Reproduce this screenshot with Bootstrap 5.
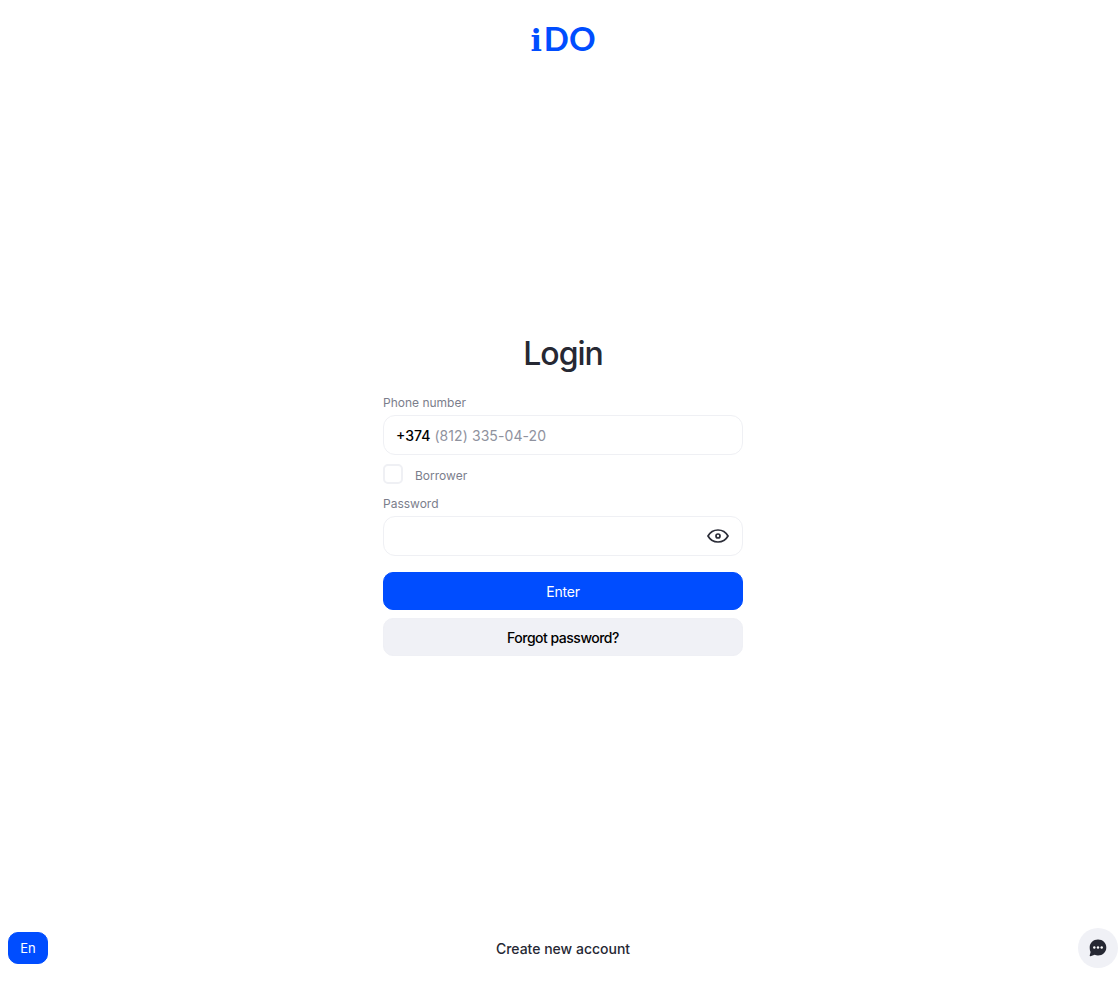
<!DOCTYPE html>
<html lang="en">
<head>
  <meta charset="UTF-8" />
  <title>Login</title>
  <link href="https://cdn.jsdelivr.net/npm/bootstrap@5.3.3/dist/css/bootstrap.min.css" rel="stylesheet" />
  <style>
    body { font-family: Inter, "Liberation Sans", sans-serif; color: #262833; background: #fff; }
    .page-wrap { height: 100vh; padding: 0 2px 22px 8px; }
    .brand-logo { font-family: Lato, sans-serif; font-weight: 700; font-size: 33px; line-height: 36px; height: 36px; color: #004dff; margin-top: 20px; }
    .brand-i { font-family: "DejaVu Serif", serif; font-weight: 700; font-size: 30px; margin-right: 2px; }
    .login-box { width: 360px; margin-top: 278px; }
    .login-title { font-size: 32px; line-height: 40px; font-weight: 500; letter-spacing: -1px; color: #262833; margin-bottom: 20px; }
    .field-label { font-size: 12px; line-height: 16px; color: #7b7e8c; padding-top: 1px; margin-bottom: 4px; display: block; }
    .field-box { height: 40px; border: 1px solid #eff0f4; border-radius: 12px; padding: 0 13px 0 12px; }
    .field-box input { border: 0; outline: 0; padding: 0; font-size: 14px; background: transparent; letter-spacing: 0.08px; }
    .field-box input::placeholder { color: #8f929e; opacity: 1; }
    .phone-prefix { font-size: 14px; font-weight: 500; color: #000; margin-right: 4px; }
    .eye-btn { border: 0; background: none; padding: 0; line-height: 0; }
    .borrower-row { margin: 9px 0 11px; height: 20px; }
    .borrower-row .form-check-input { width: 20px; height: 20px; margin: 0; border: 2px solid #eff0f4; border-radius: 5px; }
    .borrower-row label { font-size: 12px; color: #7b7e8c; margin-left: 12px; position: relative; top: 2px; }
    .btn-enter, .btn-forgot { height: 38px; border-radius: 10px; font-size: 14px; padding: 0; }
    .btn-enter { background: #004dff; border-color: #004dff; color: #fff; margin-top: 16px; font-weight: 400; letter-spacing: -0.2px; }
    .btn-forgot { background: #f0f1f6; border-color: #eff0f5; color: #000; margin-top: 8px; font-weight: 500; letter-spacing: -0.5px; }
    .bottom-bar { height: 40px; }
    .lang-btn { width: 40px; height: 32px; border-radius: 10px; background: #004dff; border-color: #004dff; color: #fff; font-size: 13px; padding: 1px 0 0; }
    .create-link { font-size: 14px; font-weight: 500; color: #262833; text-decoration: none; }
    .chat-btn { width: 40px; height: 40px; background: #f0f1f6; border: 0; padding: 0; }
  </style>
</head>
<body>

  <div class="page-wrap d-flex flex-column align-items-center">
    <!-- Logo -->
    <div class="brand-logo"><span class="brand-i">i</span>DO</div>

    <!-- Login form -->
    <main class="login-box">
      <h1 class="login-title text-center">Login</h1>
      <form>
        <label class="field-label" for="phone">Phone number</label>
        <div class="field-box d-flex align-items-center">
          <span class="phone-prefix">+374</span>
          <input type="text" id="phone" class="flex-grow-1" placeholder="(812) 335-04-20" />
        </div>

        <div class="borrower-row d-flex align-items-center">
          <input class="form-check-input" type="checkbox" id="borrower" />
          <label for="borrower">Borrower</label>
        </div>

        <label class="field-label" for="password">Password</label>
        <div class="field-box d-flex align-items-center">
          <input type="password" id="password" class="flex-grow-1" />
          <button type="button" class="eye-btn">
            <svg width="22" height="14" viewBox="0 0 22 14" fill="none" stroke="#2b2d38" stroke-width="1.7">
              <path d="M1 7C3.2 3 6.7 1 11 1s7.8 2 10 6c-2.2 4-5.7 6-10 6S3.2 11 1 7z" />
              <circle cx="11" cy="7" r="2" />
            </svg>
          </button>
        </div>

        <button type="submit" class="btn btn-enter w-100 d-block">Enter</button>
        <button type="button" class="btn btn-forgot w-100 d-block">Forgot password?</button>
      </form>
    </main>

    <!-- Footer -->
    <footer class="bottom-bar mt-auto w-100 d-flex align-items-center justify-content-between">
      <button type="button" class="btn lang-btn">En</button>
      <a href="#" class="create-link">Create new account</a>
      <button type="button" class="chat-btn rounded-circle d-flex align-items-center justify-content-center">
        <svg width="18" height="18" viewBox="0 0 18 18">
          <path fill="#262833" d="M9 .5c4.700 0 8.300 3.500 8.300 8s-3.600 8-8.300 8c-1.200 0-2.300-.2-3.300-.7L1.500 17.300c-.5.2-.9-.2-.8-.7l.9-3.700C1 11.800.7 10.200.7 8.500c0-4.500 3.600-8 8.300-8z" />
          <circle cx="5.300" cy="8.500" r="1.200" fill="#fff" />
          <circle cx="9" cy="8.500" r="1.200" fill="#fff" />
          <circle cx="12.700" cy="8.500" r="1.200" fill="#fff" />
        </svg>
      </button>
    </footer>
  </div>

  <script src="https://cdn.jsdelivr.net/npm/bootstrap@5.3.3/dist/js/bootstrap.bundle.min.js"></script>
</body>
</html>
